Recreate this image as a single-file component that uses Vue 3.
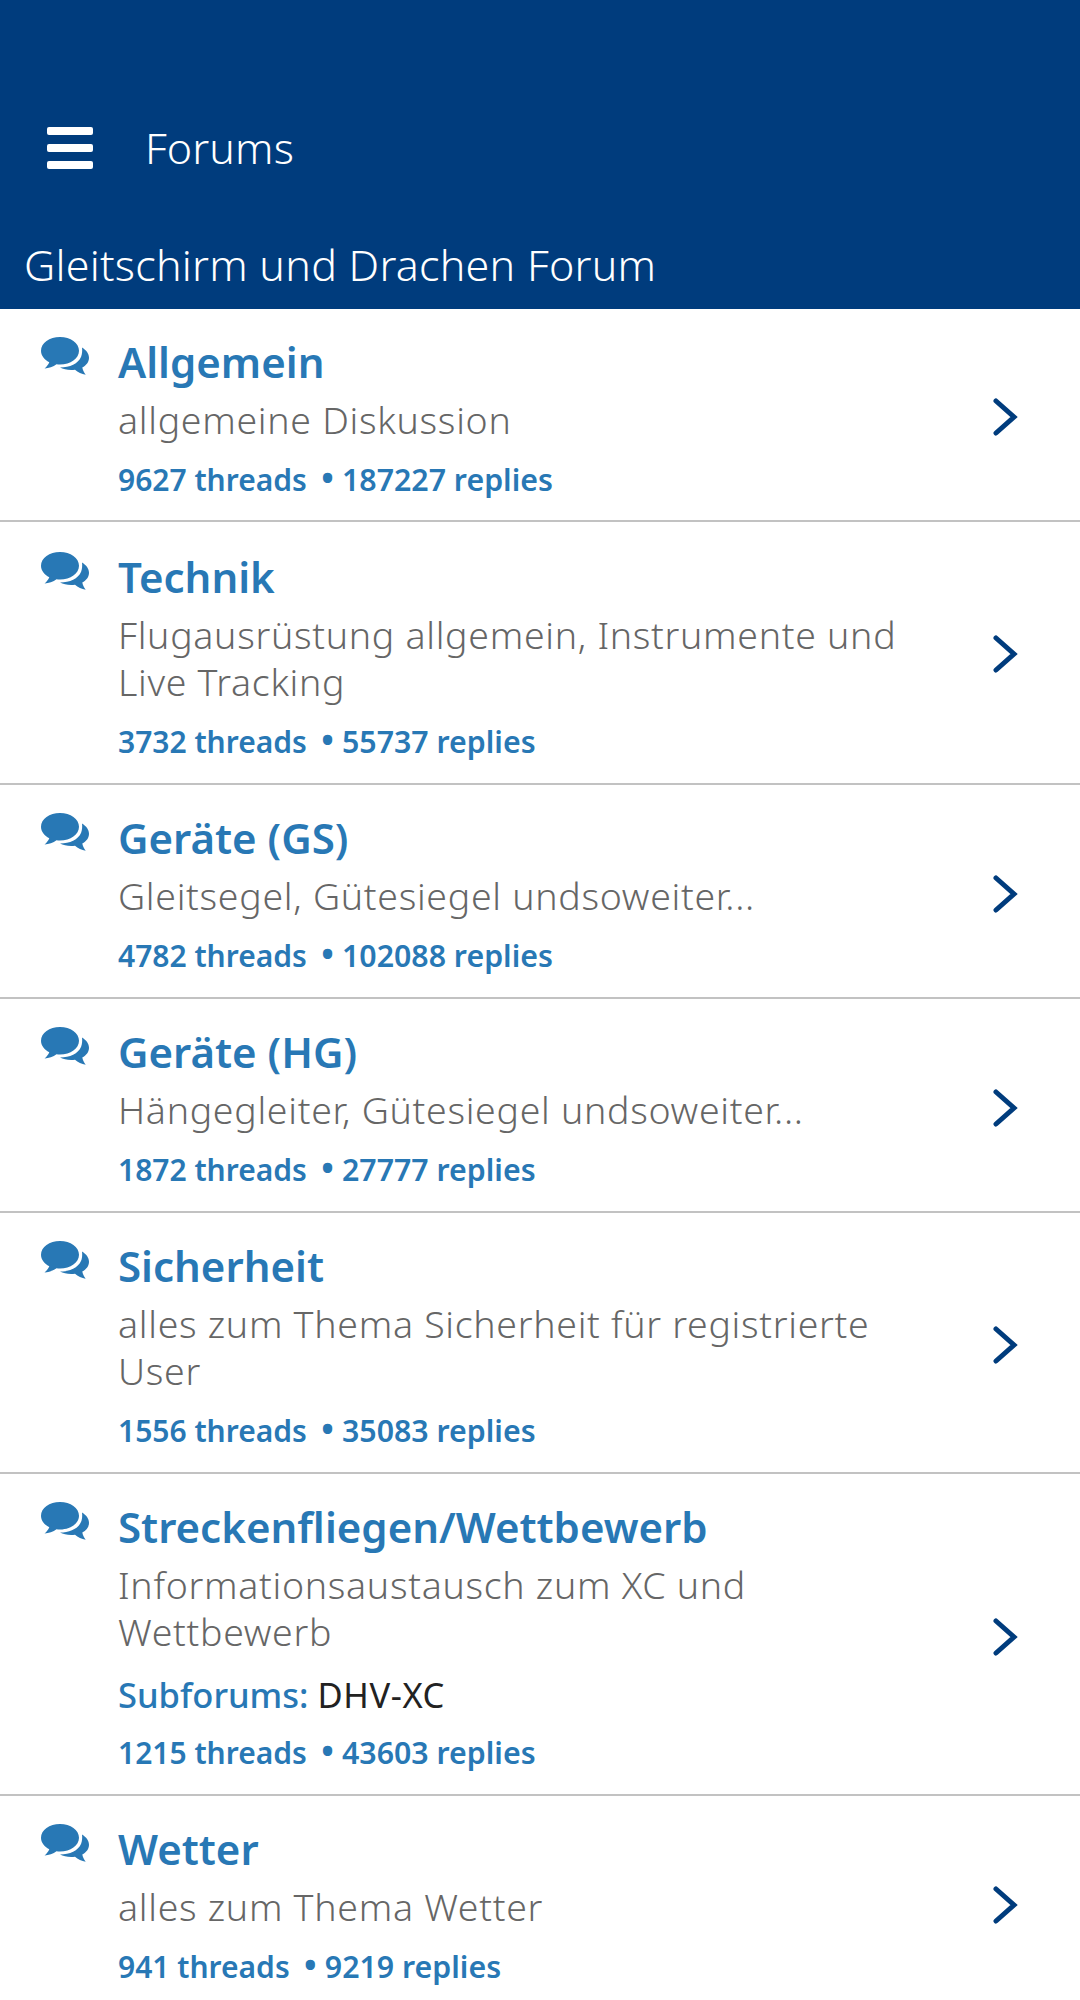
<template>
  <div class="page">
    <header class="header">
      <div class="toolbar">
        <div class="burger"><span></span><span></span><span></span></div>
        <span class="toolbar-title">Forums</span>
      </div>
      <div class="site-name">Gleitschirm und Drachen Forum</div>
    </header>
    <ul class="forums">
      <li v-for="forum in forums" :key="forum.title" class="forum">
        <svg class="bubbles" viewBox="0 0 48 38" aria-hidden="true">
          <path d="M19 0C8.500 0 0 6 0 13.700c0 4.800 3.300 9 8.300 11.500-.9 2.300-2.700 4.600-4.800 6.200 4.200-.2 8.800-1.700 12-4.100 1.100.1 2.300.2 3.500.2 10.500 0 19-6.100 19-13.800S29.500 0 19 0z" />
          <path d="M41 10.500c4.300 2.700 7 6.200 7 10.300 0 4.300-2.700 7.600-6.700 9.800.5 2.700 1.700 5.200 3.400 7.200-3.900-.7-7.900-2.700-10.700-5.100-5.600.8-11.400-.3-15-2.100 9.800-.1 18.300-3.900 21.100-10.800 1.100-2.800 1.300-6.300.9-9.300z" />
        </svg>
        <div class="body">
          <div class="title">{{ forum.title }}</div>
          <div class="desc">
            <template v-for="(line, i) in forum.desc" :key="i">{{ line }}<br v-if="i < forum.desc.length - 1" /></template>
          </div>
          <div v-if="forum.sub" class="sub"><span class="sub-label">Subforums:</span> <span class="sub-name">{{ forum.sub }}</span></div>
          <div class="stats">{{ forum.threads }} threads&nbsp;<span class="dot">•</span> <span class="replies">{{ forum.replies }} replies</span></div>
        </div>
        <svg class="chevron" viewBox="0 0 26 38" aria-hidden="true">
          <path d="M4 3l18 16L4 35" />
        </svg>
      </li>
    </ul>
  </div>
</template>

<script setup>
const forums = [
  { title: 'Allgemein', desc: ['allgemeine Diskussion'], threads: 9627, replies: 187227 },
  { title: 'Technik', desc: ['Flugausrüstung allgemein, Instrumente und', 'Live Tracking'], threads: 3732, replies: 55737 },
  { title: 'Geräte (GS)', desc: ['Gleitsegel, Gütesiegel undsoweiter...'], threads: 4782, replies: 102088 },
  { title: 'Geräte (HG)', desc: ['Hängegleiter, Gütesiegel undsoweiter...'], threads: 1872, replies: 27777 },
  { title: 'Sicherheit', desc: ['alles zum Thema Sicherheit für registrierte', 'User'], threads: 1556, replies: 35083 },
  { title: 'Streckenfliegen/Wettbewerb', desc: ['Informationsaustausch zum XC und', 'Wettbewerb'], sub: 'DHV-XC', threads: 1215, replies: 43603 },
  { title: 'Wetter', desc: ['alles zum Thema Wetter'], threads: 941, replies: 9219 },
];
</script>

<style>
html, body {
  margin: 0;
  background: #fff;
}
</style>

<style scoped>
.page {
  width: 1080px;
  height: 2000px;
  overflow: hidden;
  font-family: "Noto Sans", sans-serif;
}

.header {
  height: 309px;
  box-sizing: border-box;
  background: #003c7d;
  color: #fff;
  padding-top: 120px;
}

.toolbar {
  display: flex;
  align-items: center;
  height: 56px;
  padding-left: 47px;
  gap: 52px;
}

.burger {
  width: 46px;
  display: flex;
  flex-direction: column;
  gap: 9px;
}

.burger span {
  height: 8px;
  background: #fff;
  border-radius: 2px;
}

.toolbar-title {
  font-size: 43px;
  line-height: 56px;
  font-weight: 300;
  letter-spacing: .1px;
}

.site-name {
  margin-top: 61px;
  padding-left: 24px;
  font-size: 43px;
  line-height: 56px;
  font-weight: 300;
  letter-spacing: .25px;
}

.forums {
  list-style: none;
  margin: 0;
  padding: 0;
}

.forum {
  display: flex;
  align-items: stretch;
  border-bottom: 2px solid #c2c2c2;
  padding: 27px 0 19px 41px;
}

.forum:first-child {
  padding-bottom: 18px;
}

.forum:nth-child(2) {
  padding-top: 29px;
}

.bubbles {
  width: 48px;
  height: 38px;
  flex: none;
  fill: #2878b5;
  margin-right: 29px;
  margin-top: 1px;
}

.body {
  flex: 1;
}

.title {
  color: #2878b5;
  font-size: 42px;
  line-height: 52px;
  font-weight: 600;
}

.desc {
  color: #666;
  font-size: 37.500px;
  line-height: 47px;
  font-weight: 300;
  letter-spacing: .7px;
  margin-top: 8px;
}

.sub {
  color: #222;
  font-size: 34.500px;
  line-height: 42px;
  margin-top: 19px;
}

.sub-label {
  color: #2878b5;
  font-weight: 500;
}

.sub-name {
  letter-spacing: .6px;
}

.stats {
  color: #2878b5;
  font-size: 30px;
  line-height: 44px;
  font-weight: 600;
  margin-top: 15px;
}

.dot {
  font-size: 36px;
  line-height: 0;
  margin-left: 6px;
}

.replies {
  font-size: 30.300px;
}

.chevron {
  width: 26px;
  height: 38px;
  flex: none;
  align-self: center;
  margin-right: 62px;
  margin-top: -3px;
  fill: none;
  stroke: #003c7d;
  stroke-width: 5;
  stroke-linecap: round;
  stroke-linejoin: miter;
}

.forum:first-child .chevron {
  margin-top: -4px;
}

.forum:nth-child(2) .chevron {
  margin-top: -7px;
}
</style>
